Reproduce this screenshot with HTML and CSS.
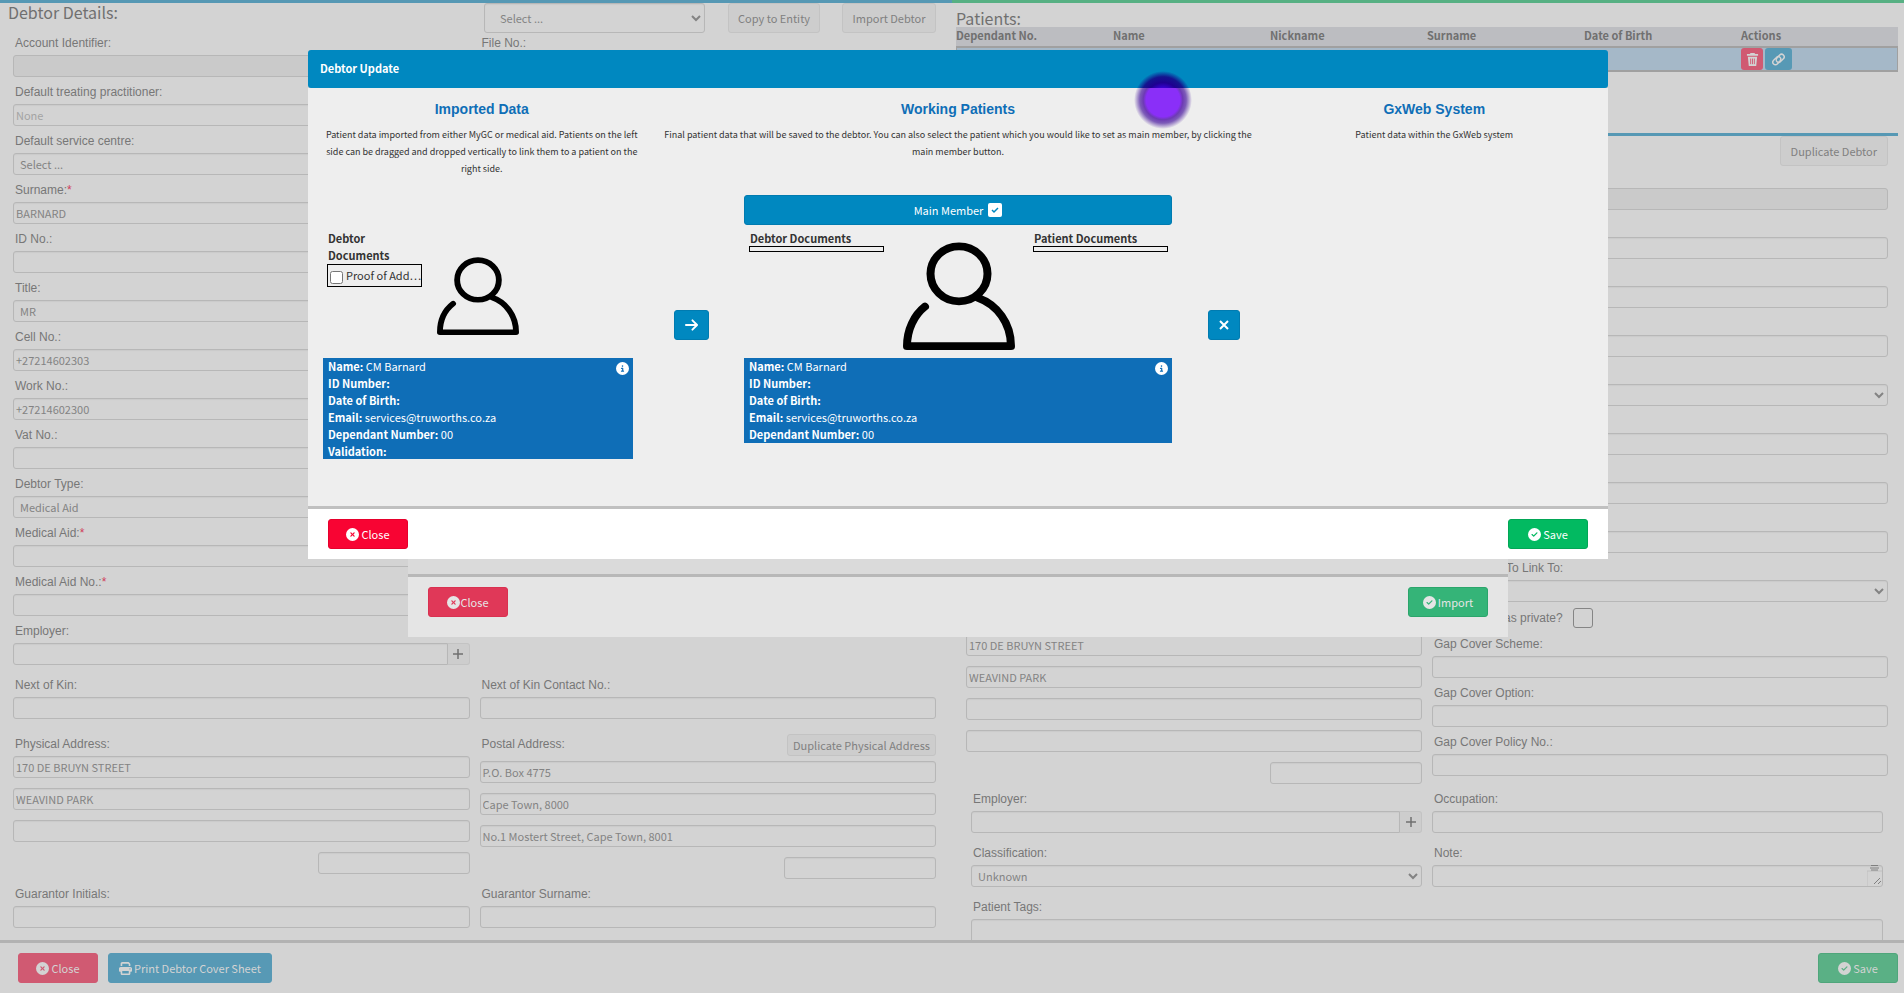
FILE: index.html
```html
<!DOCTYPE html>
<html lang="en">
<head>
  <meta charset="UTF-8" />
  <meta name="viewport" content="width=device-width, initial-scale=1" />
  <title>Debtor Update</title>
  <link rel="stylesheet" href="styles.css">
</head>
<body>
  <!-- shared icons -->
  <svg class="sprite" aria-hidden="true">
    <symbol id="i-close" viewBox="0 0 512 512"><path d="M256 512A256 256 0 1 0 256 0a256 256 0 1 0 0 512zM175 175c9.400-9.400 24.600-9.400 33.900 0l47 47 47-47c9.400-9.400 24.600-9.400 33.900 0s9.400 24.600 0 33.900l-47 47 47 47c9.400 9.400 9.400 24.600 0 33.900s-24.600 9.400-33.900 0l-47-47-47 47c-9.400 9.400-24.600 9.400-33.900 0s-9.400-24.600 0-33.900l47-47-47-47c-9.400-9.400-9.400-24.600 0-33.900z"/></symbol>
    <symbol id="i-check" viewBox="0 0 512 512"><path d="M256 512A256 256 0 1 0 256 0a256 256 0 1 0 0 512zM369 209L241 337c-9.400 9.400-24.600 9.400-33.900 0l-64-64c-9.400-9.400-9.400-24.600 0-33.900s24.600-9.400 33.900 0l47 47L335 175c9.400-9.400 24.600-9.400 33.900 0s9.400 24.600 0 33.900z"/></symbol>
    <symbol id="i-info" viewBox="0 0 512 512"><path d="M256 512A256 256 0 1 0 256 0a256 256 0 1 0 0 512zM216 336h24V272H216c-13.300 0-24-10.700-24-24s10.700-24 24-24h48c13.300 0 24 10.700 24 24v88h8c13.300 0 24 10.700 24 24s-10.700 24-24 24H216c-13.300 0-24-10.700-24-24s10.700-24 24-24zm40-208a32 32 0 1 1 0 64 32 32 0 1 1 0-64z"/></symbol>
    <symbol id="i-print" viewBox="0 0 512 512"><path d="M128 0C92.700 0 64 28.700 64 64v96h64V64H354.700L384 93.300V160h64V93.300c0-17-6.700-33.300-18.700-45.300L400 18.700C388 6.700 371.700 0 354.700 0H128zM384 352v96H128V352H384zm64 32h32c17.700 0 32-14.300 32-32V256c0-35.300-28.700-64-64-64H64c-35.300 0-64 28.700-64 64v96c0 17.700 14.300 32 32 32H64v64c0 35.300 28.700 64 64 64H384c35.300 0 64-28.700 64-64V384zM432 248a24 24 0 1 1 0 48 24 24 0 1 1 0-48z"/></symbol>
    <symbol id="i-person" viewBox="0 0 112 112" preserveAspectRatio="none"><g fill="none" stroke="#000" stroke-width="8" stroke-linecap="round" stroke-linejoin="round"><circle cx="56" cy="33" r="28.500"/><path d="M22 67C11 76 4 91 4 108H108C108 84 94 65 75 58"/></g></symbol>
  </svg>

  <main class="page">
    <section class="panel debtor">
      <div class="panel-head">
        <h1>Debtor Details:</h1>
        <select class="top-select" aria-label="Entity"><option>Select ...</option></select>
        <button class="btn grey copy">Copy to Entity</button>
        <button class="btn grey import">Import Debtor</button>
      </div>
      <div class="fields">
        <div class="field"><label for="account">Account Identifier:</label><input id="account" disabled /></div>
        <div class="field"><label for="fileNo">File No.:</label><input id="fileNo" /></div>
        <div class="field one"><label for="practitioner">Default treating practitioner:</label><input id="practitioner" placeholder="None" /></div>
        <div class="field one"><label for="centre">Default service centre:</label><select id="centre"><option>Select ...</option></select></div>
        <div class="field one"><label for="surname">Surname:<span class="req">*</span></label><input id="surname" value="BARNARD" /></div>
        <div class="field one"><label for="idNo">ID No.:</label><input id="idNo" /></div>
        <div class="field one"><label for="title">Title:</label><select id="title"><option>MR</option></select></div>
        <div class="field one"><label for="cell">Cell No.:</label><input id="cell" value="+27214602303" /></div>
        <div class="field one"><label for="work">Work No.:</label><input id="work" value="+27214602300" /></div>
        <div class="field one"><label for="vat">Vat No.:</label><input id="vat" /></div>
        <div class="field one"><label for="debtorType">Debtor Type:</label><select id="debtorType"><option>Medical Aid</option></select></div>
        <div class="field one"><label for="medAid">Medical Aid:<span class="req">*</span></label><input id="medAid" /></div>
        <div class="field one"><label for="medAidNo">Medical Aid No.:<span class="req">*</span></label><input id="medAidNo" /></div>
        <div class="field one"><label for="employer">Employer:</label>
          <div class="with-add"><input id="employer" /><button class="add" aria-label="Add employer"><svg viewBox="0 0 10 10"><path d="M5 0v10M0 5h10"/></svg></button></div>
        </div>
        <div class="field one spaced"><label for="kin">Next of Kin:</label><input id="kin" /></div>
        <div class="field spaced"><label for="kinNo">Next of Kin Contact No.:</label><input id="kinNo" /></div>
        <div class="field address top-gap">
          <label for="phys1">Physical Address:</label>
          <input id="phys1" value="170 DE BRUYN STREET" />
          <input aria-label="Physical address line 2" value="WEAVIND PARK" />
          <input aria-label="Physical address line 3" />
          <input class="code" aria-label="Physical address code" />
        </div>
        <div class="field address top-gap">
          <div class="label-row"><label for="post1">Postal Address:</label><button class="btn grey small">Duplicate Physical Address</button></div>
          <input id="post1" value="P.O. Box 4775" />
          <input aria-label="Postal address line 2" value="Cape Town, 8000" />
          <input aria-label="Postal address line 3" value="No.1 Mostert Street, Cape Town, 8001" />
          <input class="code" aria-label="Postal address code" />
        </div>
        <div class="field"><label for="gInitials">Guarantor Initials:</label><input id="gInitials" /></div>
        <div class="field"><label for="gSurname">Guarantor Surname:</label><input id="gSurname" /></div>
      </div>
    </section>

    <section class="panel patients">
      <div class="patient-list">
        <h1>Patients:</h1>
        <table>
          <thead>
            <tr><th>Dependant No.</th><th>Name</th><th>Nickname</th><th>Surname</th><th>Date of Birth</th><th>Actions</th></tr>
          </thead>
          <tbody>
            <tr>
              <td></td><td></td><td></td><td></td><td></td>
              <td>
                <div class="actions">
                  <button class="icon-btn trash" aria-label="Delete patient"><svg viewBox="0 0 14 14"><path fill="currentColor" d="M5 0h4l1 1h3v2H1V1h3zM2 4h10l-1 10H3z"/><path class="slots" d="M5 6v6M7 6v6M9 6v6"/></svg></button>
                  <button class="icon-btn link" aria-label="Link patient"><svg viewBox="0 0 16 16"><g fill="none" stroke="currentColor" stroke-width="1.800" stroke-linecap="round"><path d="M9.500 10.500l-3 3a3 3 0 0 1-4.500-4.500l3.500-3.500a3 3 0 0 1 4.500 4"/><path d="M6.500 5.500l3-3a3 3 0 0 1 4.500 4.500l-3.500 3.500a3 3 0 0 1-4.500-4"/></g></svg></button>
                </div>
              </td>
            </tr>
          </tbody>
        </table>
      </div>
      <div class="patient-form">
        <div class="form-head"><button class="btn grey">Duplicate Debtor</button></div>
        <div class="form-cols">
          <div class="col address left">
            <input aria-label="Patient address line 1" value="170 DE BRUYN STREET" />
            <input aria-label="Patient address line 2" value="WEAVIND PARK" />
            <input aria-label="Patient address line 3" />
            <input aria-label="Patient address line 4" />
            <input class="code" aria-label="Patient address code" />
          </div>
          <div class="col">
            <div class="field bare"><input aria-label="Patient identifier" disabled /></div>
            <div class="field bare"><input aria-label="Patient field 2" /></div>
            <div class="field bare"><input aria-label="Patient field 3" /></div>
            <div class="field bare"><input aria-label="Patient field 4" /></div>
            <div class="field bare"><select aria-label="Patient field 5"><option></option></select></div>
            <div class="field bare"><input aria-label="Patient field 6" /></div>
            <div class="field bare"><input aria-label="Patient field 7" /></div>
            <div class="field bare"><input aria-label="Patient field 8" /></div>
            <div class="field"><label class="link-label" for="linkTo">To Link To:</label><select id="linkTo"><option></option></select></div>
            <div class="private"><label for="private">as private?</label><input type="checkbox" id="private" /></div>
            <div class="field"><label for="gapScheme">Gap Cover Scheme:</label><input id="gapScheme" /></div>
            <div class="field"><label for="gapOption">Gap Cover Option:</label><input id="gapOption" /></div>
            <div class="field"><label for="gapPolicy">Gap Cover Policy No.:</label><input id="gapPolicy" /></div>
          </div>
        </div>
        <div class="fields lower">
          <div class="field"><label for="pEmployer">Employer:</label>
            <div class="with-add"><input id="pEmployer" /><button class="add" aria-label="Add employer"><svg viewBox="0 0 10 10"><path d="M5 0v10M0 5h10"/></svg></button></div>
          </div>
          <div class="field"><label for="occupation">Occupation:</label><input id="occupation" /></div>
          <div class="field spaced"><label for="classification">Classification:</label><select id="classification"><option>Unknown</option></select></div>
          <div class="field spaced"><label for="note">Note:</label>
            <div class="note"><textarea id="note"></textarea><svg class="grip" viewBox="0 0 15 21"><path d="M0 6h15M0 6v15" stroke="#c0c0c0"/><path d="M4 0.500h7M3 3h9M4 5h7M7 19l6-6M11 19l3-3"/></svg></div>
          </div>
          <div class="field wide spaced"><label for="tags">Patient Tags:</label><textarea id="tags" class="tags"></textarea></div>
        </div>
      </div>
    </section>
  </main>

  <footer class="page-footer">
    <button class="btn red"><svg class="icon"><use href="#i-close"/></svg>Close</button>
    <button class="btn blue"><svg class="icon"><use href="#i-print"/></svg>Print Debtor Cover Sheet</button>
    <button class="btn green"><svg class="icon"><use href="#i-check"/></svg>Save</button>
  </footer>

  <!-- import dialog sitting under the update dialog -->
  <div class="modal import-modal">
    <div class="modal-foot">
      <button class="btn red"><svg class="icon"><use href="#i-close"/></svg>Close</button>
      <button class="btn green"><svg class="icon"><use href="#i-check"/></svg>Import</button>
    </div>
  </div>

  <div class="modal update-modal" role="dialog" aria-labelledby="modalTitle">
    <div class="modal-head" id="modalTitle">Debtor Update</div>
    <div class="modal-body">
      <div class="intro">
        <div>
          <h2>Imported Data</h2>
          <p>Patient data imported from either MyGC or medical aid. Patients on the left side can be dragged and dropped vertically to link them to a patient on the right side.</p>
        </div>
        <div>
          <h2>Working Patients</h2>
          <p class="narrow">Final patient data that will be saved to the debtor. You can also select the patient which you would like to set as main member, by clicking the main member button.</p>
        </div>
        <div>
          <h2>GxWeb System</h2>
          <p>Patient data within the GxWeb system</p>
        </div>
      </div>
      <div class="match">
        <div class="imported">
          <div class="card-top">
            <div class="docs">
              <b>Debtor Documents</b>
              <div class="doc-box"><input type="checkbox" id="proof" /><label for="proof">Proof of Add…</label></div>
            </div>
            <svg class="person small"><use href="#i-person"/></svg>
          </div>
          <div class="info">
            <svg class="icon info-icon"><use href="#i-info"/></svg>
            <div><b>Name:</b> CM Barnard</div>
            <div><b>ID Number:</b></div>
            <div><b>Date of Birth:</b></div>
            <div><b>Email:</b> services@truworths.co.za</div>
            <div><b>Dependant Number:</b> 00</div>
            <div class="last"><b>Validation:</b></div>
          </div>
        </div>
        <div class="move"><button class="btn blue" aria-label="Move right"><svg class="arrow" viewBox="0 0 14 12"><path d="M1 6h12M8 1l5 5-5 5"/></svg></button></div>
        <div class="working">
          <button class="btn blue main-member">Main Member <svg class="tick" viewBox="0 0 14 14"><rect width="14" height="14" rx="2" fill="#fff"/><path d="M4 7l2 2 4-4" fill="none" stroke="#0088c0" stroke-width="1.500"/></svg></button>
          <div class="card-top">
            <div class="docs"><b>Debtor Documents</b><div class="doc-box empty"></div></div>
            <svg class="person"><use href="#i-person"/></svg>
            <div class="docs"><b>Patient Documents</b><div class="doc-box empty"></div></div>
          </div>
          <div class="info">
            <svg class="icon info-icon"><use href="#i-info"/></svg>
            <div><b>Name:</b> CM Barnard</div>
            <div><b>ID Number:</b></div>
            <div><b>Date of Birth:</b></div>
            <div><b>Email:</b> services@truworths.co.za</div>
            <div><b>Dependant Number:</b> 00</div>
          </div>
        </div>
        <div class="move remove"><button class="btn blue" aria-label="Remove"><svg class="cross" viewBox="0 0 10 10"><path d="M1 1l8 8M9 1l-8 8"/></svg></button></div>
      </div>
    </div>
    <div class="modal-foot">
      <button class="btn red"><svg class="icon"><use href="#i-close"/></svg>Close</button>
      <button class="btn green"><svg class="icon"><use href="#i-check"/></svg>Save</button>
    </div>
  </div>

  <!-- pointer highlight, darker where it lies over the blue title bar -->
  <svg class="pointer" viewBox="0 0 60 60" aria-hidden="true">
    <defs>
      <radialGradient id="pl"><stop offset="0" stop-color="#8a2ff8"/><stop offset=".58" stop-color="#8a2ff8"/><stop offset=".68" stop-color="#6d3bb4"/><stop offset=".8" stop-color="#7d5cb8"/><stop offset="1" stop-color="#7d5cb8" stop-opacity="0"/></radialGradient>
      <radialGradient id="pd"><stop offset="0" stop-color="#3e00e0"/><stop offset=".4" stop-color="#3a00d8"/><stop offset=".6" stop-color="#1e0090"/><stop offset=".8" stop-color="#14148f"/><stop offset="1" stop-color="#14148f" stop-opacity="0"/></radialGradient>
      <clipPath id="ct"><rect width="60" height="18"/></clipPath>
      <clipPath id="cb"><rect y="18" width="60" height="42"/></clipPath>
    </defs>
    <circle cx="30" cy="30" r="29" fill="url(#pd)" clip-path="url(#ct)"/>
    <circle cx="30" cy="30" r="29" fill="url(#pl)" clip-path="url(#cb)"/>
  </svg>
</body>
</html>
```
FILE: styles.css
```css
* {
  box-sizing: border-box;
}
body {
  margin: 0;
  height: 100vh;
  display: flex;
  flex-direction: column;
  overflow: hidden;
  position: relative;
  background: #d3d3d3;
  color: #777;
  font-family: 'Noto Sans CJK SC', 'Source Sans Pro', sans-serif;
  font-size: 11px;
  line-height: 17px;
}
h1, h2, p {
  margin: 0;
}
.sprite {
  display: none;
}
.page {
  flex: 1;
  min-height: 0;
  display: grid;
  grid-template-columns: minmax(0, 1fr) minmax(0, 1fr);
  overflow: hidden;
}
.debtor {
  border-top: 3px solid #5698b4;
  padding: 0 16px 0 13px;
}
.panel-head {
  display: flex;
  height: 30px;
}
h1 {
  font-size: 16px;
  font-weight: 400;
  line-height: 18px;
  color: #707070;
}
.panel-head h1 {
  flex: 1;
  margin-left: -5px;
}
.copy {
  width: 92px;
  margin-right: 22px;
}
.import {
  width: 94px;
}

/* buttons */
.btn {
  display: inline-flex;
  align-items: center;
  justify-content: center;
  gap: 2px;
  height: 30px;
  padding: 0 10px;
  border: 1px solid;
  border-radius: 3px;
  font: inherit;
  white-space: nowrap;
  color: #d3d3d3;
}
.btn.grey {
  background: #cdcdcd;
  border-color: #c3c3c3;
  color: #808080;
}
.btn.grey.small {
  height: 22px;
  padding: 0 5px;
}
.btn.red, .btn.green {
  width: 80px;
}
.btn.red {
  background: #d05a72;
  border-color: #d05a72;
}
.btn.green {
  background: #5ab085;
  border-color: #4fa67b;
}
.btn.blue {
  background: #5799b5;
  border-color: #5799b5;
}
.icon {
  width: 13px;
  height: 13px;
  fill: currentColor;
}

/* form fields */
.fields {
  display: grid;
  grid-template-columns: 1fr 1fr;
  column-gap: 10px;
}
.debtor .fields {
  margin-top: -5px;
}
.field {
  min-width: 0;
}
.field.one {
  grid-column: 1;
}
.field.wide {
  grid-column: 1 / 3;
}
.spaced {
  padding-top: 5px;
}
.top-gap {
  padding-top: 10px;
}
.field label, .private label {
  display: block;
  padding: 7px 2px 3px;
  font-family: 'Liberation Sans', Arial, sans-serif;
  font-size: 12px;
}
.label-row {
  display: flex;
  justify-content: space-between;
  align-items: flex-end;
}
.req {
  color: #d0405c;
}
input:not([type]), select, textarea {
  display: block;
  width: 100%;
  height: 22px;
  margin: 0;
  padding: 0 2px;
  border: 1px solid #b7b7b7;
  border-radius: 3px;
  box-shadow: inset 0 1px 1px #cacaca;
  background: #d3d3d3;
  color: #838383;
  font: inherit;
}
input:disabled {
  background: #cacaca;
}
input::placeholder {
  color: #a3a3a3;
}
select.top-select {
  width: 221px;
  height: 30px;
  padding-left: 11px;
  margin-right: 23px;
}
.with-add {
  display: flex;
}
.with-add input:not([type]) {
  flex: 1;
  border-radius: 3px 0 0 3px;
}
.add {
  width: 22px;
  height: 22px;
  padding: 0;
  display: flex;
  align-items: center;
  justify-content: center;
  background: #cdcdcd;
  border: 1px solid #c3c3c3;
  border-left: 0;
  border-radius: 0 3px 3px 0;
}
.add svg {
  width: 10px;
  height: 10px;
  stroke: #707070;
  stroke-width: 1.5;
}
.address input + input {
  margin-top: 10px;
}
.address .label-row + input {
  margin-top: 5px;
}
.address input.code {
  width: 33.3%;
  margin-left: auto;
}

/* patients */
.patients {
  display: flex;
  flex-direction: column;
  border-top: 3px solid #57b083;
  padding: 0 6px 0 4px;
}
.patient-list {
  height: 130px;
  padding-top: 6px;
  flex-shrink: 0;
}
table {
  width: 100%;
  table-layout: fixed;
  border-collapse: separate;
  border-spacing: 0;
}
th {
  height: 19px;
  padding: 0 0 2px;
  text-align: left;
  line-height: 17px;
  background: #bcbdc1;
  color: #707070;
}
td {
  height: 26px;
  padding: 0;
  background: #a5b8c8;
  border: solid #a0a0a0;
  border-width: 2px 0;
}
td:first-child {
  border-left-width: 1px;
}
td:last-child {
  border-right-width: 1px;
}
.actions {
  display: flex;
  gap: 2px;
}
.icon-btn {
  width: 22px;
  height: 22px;
  display: flex;
  align-items: center;
  justify-content: center;
  padding: 0;
  border: 0;
  border-radius: 3px;
  color: #d3d3d3;
}
.icon-btn svg {
  width: 13px;
  height: 13px;
}
.trash {
  background: #d05a72;
}
.link {
  width: 27px;
  background: #5799b5;
}
.slots {
  stroke: #d05a72;
}
.patient-form {
  border-top: 3px solid #5698b4;
  padding: 0 10px;
}
.form-head {
  display: flex;
  justify-content: flex-end;
  height: 25px;
}
.form-cols {
  display: grid;
  grid-template-columns: 1fr 1fr;
  gap: 10px;
}
.col.left {
  display: flex;
  flex-direction: column;
  justify-content: flex-end;
}
.col + .col {
  padding-bottom: 8px;
}
.field.bare {
  padding-top: 27px;
}
.field .link-label {
  padding-left: 74px;
}
.private {
  display: flex;
  align-items: center;
  height: 27px;
  gap: 8px;
  padding-left: 70px;
}
.private label {
  padding-bottom: 0;
  padding-top: 5px;
}
.private input {
  appearance: none;
  width: 20px;
  height: 20px;
  margin: 5px 0 0;
  border: 1px solid #858585;
  border-radius: 3px;
}
.lower {
  padding: 0 5px;
}
textarea {
  resize: none;
  overflow: hidden;
}
textarea.tags {
  height: 44px;
}
.note {
  position: relative;
}
.grip {
  position: absolute;
  right: 1px;
  top: 0;
  width: 15px;
  height: 21px;
  fill: none;
  stroke: #808080;
}

.page-footer {
  display: flex;
  gap: 10px;
  padding: 10px 6px 10px 18px;
  border-top: 3px solid #b2b2b2;
}
.page-footer .green {
  margin-left: auto;
}

/* dialogs */
.modal {
  position: absolute;
}
.modal .btn {
  color: #fff;
}
.modal-foot {
  display: flex;
  justify-content: space-between;
  padding: 10px 20px;
  border-top: 3px solid #c0c0c0;
  background: #fff;
}
.import-modal {
  left: 408px;
  right: 396px;
  top: 500px;
  padding-top: 74px;
  background: #dadada;
}
.import-modal .modal-foot {
  padding-bottom: 20px;
  border-color: #b8b8b8;
  background: #e5e5e5;
}
.import-modal .btn {
  color: #e5e5e5;
}
.import-modal .btn.red {
  background: #e03858;
  border-color: #d93150;
  gap: 0;
}
.import-modal .btn.green {
  background: #35b478;
  border-color: #2ba56b;
}
.update-modal {
  left: 308px;
  right: 296px;
  top: 50px;
  color: #333;
}
.update-modal .btn.red {
  background: #f80433;
  border-color: #e6002c;
}
.update-modal .btn.green {
  background: #02ba61;
  border-color: #02a656;
}
.update-modal .btn.blue {
  background: #0088c0;
  border-color: #007bb0;
}
.modal-head {
  height: 38px;
  padding: 10px 12px;
  background: #0088c0;
  border-radius: 3px;
  color: #fff;
  font-weight: 700;
}
.modal-body {
  min-height: 418px;
  padding: 13px 15px;
  background: #eee;
}
.intro {
  display: grid;
  grid-template-columns: 1fr 2fr 1fr;
  text-align: center;
}
h2 {
  margin-bottom: 8px;
  font: 700 14px/17px 'Liberation Sans', Arial, sans-serif;
  color: #0f6eb7;
}
.intro p {
  font-size: 9px;
}
.intro .narrow {
  padding: 0 15px;
}
.match {
  display: grid;
  grid-template-columns: 31fr 11fr 43fr 11fr 31fr;
  margin-top: 18px;
}
.imported {
  padding-top: 30px;
}
.working {
  padding: 0 1px;
}
.card-top {
  display: flex;
  justify-content: space-between;
  height: 133px;
  padding: 5px 4px 0 5px;
}
.docs {
  width: 135px;
}
.docs b {
  display: block;
  padding-left: 1px;
}
.imported .docs {
  width: 95px;
}
.imported .card-top {
  justify-content: flex-start;
  gap: 15px;
  padding-left: 4px;
}
.imported .docs b {
  width: 80px;
}
.doc-box {
  display: flex;
  align-items: center;
  height: 23px;
  border: 1px solid #000;
  white-space: nowrap;
}
.doc-box input {
  margin: 3px 3px 0 2px;
}
.doc-box.empty {
  height: 6px;
  margin-top: -1px;
}
.person {
  width: 112px;
  height: 108px;
  margin-top: 12px;
}
.person.small {
  width: 82px;
  height: 78px;
  margin-top: 27px;
}
.info {
  position: relative;
  padding: 0 5px;
  background: #0f6eb7;
  color: #fff;
}
.info .last {
  line-height: 16px;
}
.info-icon {
  position: absolute;
  right: 4px;
  top: 4px;
}
.move {
  padding: 115px 0 0 41px;
}
.remove {
  padding-left: 35px;
}
.arrow {
  width: 13px;
  height: 12px;
  fill: none;
  stroke: #fff;
  stroke-width: 2;
  stroke-linecap: round;
}
.cross {
  width: 10px;
  height: 10px;
  stroke: #fff;
  stroke-width: 2;
}
.main-member {
  width: 100%;
  gap: 5px;
}
.tick {
  width: 14px;
  height: 14px;
}
.pointer {
  position: absolute;
  left: 1133px;
  top: 70px;
  width: 60px;
  height: 60px;
}
```
